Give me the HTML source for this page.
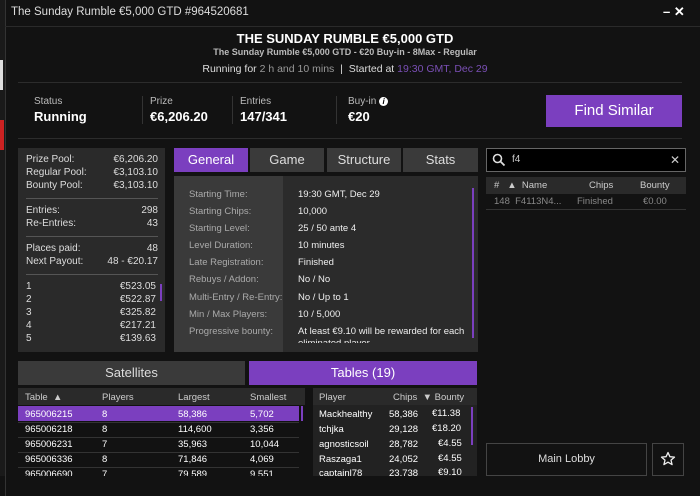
<!DOCTYPE html><html><head><style>
*{margin:0;padding:0;box-sizing:border-box}
body{width:700px;height:496px;background:#1a1a1a;font-family:"Liberation Sans",sans-serif;color:#fff;position:relative;overflow:hidden}
.a{position:absolute}
.win{left:5px;top:0;width:695px;height:496px;background:#121212;border-left:1px solid #333}
.t{font-size:11px;white-space:nowrap}
.panel{background:#2a2a2a}
.gray{color:#bbb}
.tab{position:absolute;background:#3a3a3a;color:#ddd;font-size:13px;text-align:center;line-height:24px}
.row{position:absolute;font-size:9.5px;white-space:nowrap}
</style></head><body>
<div class="a win"></div>
<div class="a" style="left:0;top:120px;width:4px;height:30px;background:#c22"></div>
<div class="a" style="left:0;top:60px;width:3px;height:30px;background:#ddd"></div>
<div class="a t" style="left:11px;top:6px;font-size:11.5px;color:#ddd">The Sunday Rumble €5,000 GTD #964520681</div>
<div class="a" style="left:663px;top:4px;font-size:13px;font-weight:bold">– ✕</div>
<div class="a" style="left:5px;top:26px;width:695px;height:1px;background:#2a2a2a"></div>
<div class="a t" style="left:0;width:690px;text-align:center;top:31px;font-size:13px;font-weight:bold">THE SUNDAY RUMBLE €5,000 GTD</div>
<div class="a t" style="left:0;width:690px;text-align:center;top:47px;font-size:9px;font-weight:bold;color:#bbb">The Sunday Rumble €5,000 GTD - €20 Buy-in - 8Max - Regular</div>
<div class="a t" style="left:0;width:690px;text-align:center;top:63px;font-size:10.5px;color:#ddd">Running for <span style="color:#999">2 h and 10 mins</span> &nbsp;|&nbsp; Started at <span style="color:#7a4fb5">19:30 GMT, Dec 29</span></div>
<div class="a" style="left:18px;top:82px;width:664px;height:1px;background:#2c2c2c"></div>
<div class="a t gray" style="left:34px;top:96px;font-size:10px">Status</div><div class="a t" style="left:34px;top:109px;font-size:13px;font-weight:bold">Running</div>
<div class="a" style="left:142px;top:96px;width:1px;height:28px;background:#333"></div>
<div class="a t gray" style="left:150px;top:96px;font-size:10px">Prize</div><div class="a t" style="left:150px;top:109px;font-size:13px;font-weight:bold">€6,206.20</div>
<div class="a" style="left:232px;top:96px;width:1px;height:28px;background:#333"></div>
<div class="a t gray" style="left:240px;top:96px;font-size:10px">Entries</div><div class="a t" style="left:240px;top:109px;font-size:13px;font-weight:bold">147/341</div>
<div class="a" style="left:336px;top:96px;width:1px;height:28px;background:#333"></div>
<div class="a t gray" style="left:348px;top:96px;font-size:10px">Buy-in <span style="display:inline-block;width:9px;height:9px;border-radius:50%;background:#fff;color:#000;font-size:8px;line-height:9px;text-align:center;font-style:italic;font-weight:bold">i</span></div><div class="a t" style="left:348px;top:109px;font-size:13px;font-weight:bold">€20</div>
<div class="a" style="left:546px;top:95px;width:136px;height:32px;background:#7b3fbf;font-size:15px;text-align:center;line-height:32px">Find Similar</div>
<div class="a" style="left:18px;top:138px;width:664px;height:1px;background:#2c2c2c"></div>

<div class="a panel" style="left:18px;top:148px;width:147px;height:204px"></div>
<div class="a" style="left:26px;top:153px;width:132px;font-size:10px;line-height:13px;color:#ddd">
<div style="display:flex;justify-content:space-between"><span>Prize Pool:</span><span>€6,206.20</span></div>
<div style="display:flex;justify-content:space-between"><span>Regular Pool:</span><span>€3,103.10</span></div>
<div style="display:flex;justify-content:space-between"><span>Bounty Pool:</span><span>€3,103.10</span></div>
<div style="height:1px;background:#555;margin:6px 0 5px"></div>
<div style="display:flex;justify-content:space-between"><span>Entries:</span><span>298</span></div>
<div style="display:flex;justify-content:space-between"><span>Re-Entries:</span><span>43</span></div>
<div style="height:1px;background:#555;margin:6px 0 5px"></div>
<div style="display:flex;justify-content:space-between"><span>Places paid:</span><span>48</span></div>
<div style="display:flex;justify-content:space-between"><span>Next Payout:</span><span>48 - €20.17</span></div>
<div style="height:1px;background:#555;margin:6px 0 5px"></div>
<div style="display:flex;justify-content:space-between;padding-right:2px"><span>1</span><span>€523.05</span></div>
<div style="display:flex;justify-content:space-between;padding-right:2px"><span>2</span><span>€522.87</span></div>
<div style="display:flex;justify-content:space-between;padding-right:2px"><span>3</span><span>€325.82</span></div>
<div style="display:flex;justify-content:space-between;padding-right:2px"><span>4</span><span>€217.21</span></div>
<div style="display:flex;justify-content:space-between;padding-right:2px"><span>5</span><span>€139.63</span></div>
</div>
<div class="a" style="left:160px;top:284px;width:2px;height:17px;background:#7b3fbf"></div>

<div class="tab" style="left:174px;top:148px;width:74px;background:#7b3fbf;color:#fff">General</div>
<div class="tab" style="left:250px;top:148px;width:74px">Game</div>
<div class="tab" style="left:327px;top:148px;width:74px">Structure</div>
<div class="tab" style="left:403px;top:148px;width:75px">Stats</div>
<div class="a" style="left:174px;top:176px;width:304px;height:176px;background:#2b2b2b"></div>
<div class="a" style="left:174px;top:176px;width:109px;height:176px;background:#3a3a3a"></div>
<div class="a" style="left:189px;top:186px;font-size:9.5px;line-height:17.1px;color:#aaa;white-space:nowrap">Starting Time:<br>Starting Chips:<br>Starting Level:<br>Level Duration:<br>Late Registration:<br>Rebuys / Addon:<br>Multi-Entry / Re-Entry:<br>Min / Max Players:<br>Progressive bounty:</div>
<div class="a" style="left:298px;top:186px;width:168px;font-size:9.5px;line-height:17.1px;color:#eee;height:157px;overflow:hidden">19:30 GMT, Dec 29<br>10,000<br>25 / 50 ante 4<br>10 minutes<br>Finished<br>No / No<br>No / Up to 1<br>10 / 5,000<br><span style="line-height:12px;display:block;margin-top:3px">At least €9.10 will be rewarded for each eliminated player</span></div>
<div class="a" style="left:472px;top:188px;width:2px;height:150px;background:#7b3fbf"></div>

<div class="a" style="left:486px;top:148px;width:200px;height:24px;background:#000;border:1px solid #666"></div>
<svg class="a" style="left:492px;top:153px" width="14" height="14"><circle cx="5.5" cy="5.5" r="4" stroke="#ddd" stroke-width="1.6" fill="none"/><line x1="8.5" y1="8.5" x2="12.5" y2="12.5" stroke="#ddd" stroke-width="1.8"/></svg>
<div class="a t" style="left:512px;top:154px;font-size:10px;color:#ccc">f4</div>
<div class="a t" style="left:670px;top:153px;font-size:12px;color:#ccc">✕</div>
<div class="a" style="left:486px;top:177px;width:200px;height:17px;background:#2a2a2a"></div>
<div class="row" style="left:494px;top:180px;color:#ccc">#&nbsp;&nbsp;&nbsp;▲&nbsp;&nbsp;Name</div>
<div class="row" style="left:589px;top:180px;color:#ccc">Chips</div>
<div class="row" style="left:640px;top:180px;color:#ccc">Bounty</div>
<div class="row" style="left:494px;top:196px;color:#888">148&nbsp;&nbsp;F4113N4...</div>
<div class="row" style="left:577px;top:196px;color:#888">Finished</div>
<div class="row" style="left:643px;top:196px;color:#888">€0.00</div>
<div class="a" style="left:486px;top:209px;width:200px;height:1px;background:#333"></div>

<div class="tab" style="left:18px;top:361px;width:227px;font-size:13px">Satellites</div>
<div class="tab" style="left:249px;top:361px;width:228px;background:#7b3fbf;color:#fff;font-size:13px">Tables (19)</div>
<div class="a" style="left:18px;top:388px;width:287px;height:17px;background:#2a2a2a"></div>
<div class="a" style="left:313px;top:388px;width:164px;height:17px;background:#2a2a2a"></div>
<div class="a" style="left:313px;top:405px;width:164px;height:91px;background:#222"></div>
<div class="row" style="left:25px;top:392px;color:#ccc">Table &nbsp;▲</div><div class="row" style="left:102px;top:392px;color:#ccc">Players</div><div class="row" style="left:178px;top:392px;color:#ccc">Largest</div><div class="row" style="left:250px;top:392px;color:#ccc">Smallest</div>
<div class="a" style="left:18px;top:406px;width:281px;height:15px;background:#7b3fbf"></div>
<div class="a" style="left:301px;top:406px;width:2px;height:15px;background:#7b3fbf"></div>
<div class="row" style="left:25px;top:409px">965006215</div><div class="row" style="left:102px;top:409px">8</div><div class="row" style="left:178px;top:409px">58,386</div><div class="row" style="left:250px;top:409px">5,702</div>
<div class="a" style="left:18px;top:422px;width:281px;height:1px;background:#333"></div>
<div class="row" style="left:25px;top:424px">965006218</div><div class="row" style="left:102px;top:424px">8</div><div class="row" style="left:178px;top:424px">114,600</div><div class="row" style="left:250px;top:424px">3,356</div>
<div class="a" style="left:18px;top:437px;width:281px;height:1px;background:#333"></div>
<div class="row" style="left:25px;top:439px">965006231</div><div class="row" style="left:102px;top:439px">7</div><div class="row" style="left:178px;top:439px">35,963</div><div class="row" style="left:250px;top:439px">10,044</div>
<div class="a" style="left:18px;top:452px;width:281px;height:1px;background:#333"></div>
<div class="row" style="left:25px;top:454px">965006336</div><div class="row" style="left:102px;top:454px">8</div><div class="row" style="left:178px;top:454px">71,846</div><div class="row" style="left:250px;top:454px">4,069</div>
<div class="a" style="left:18px;top:467px;width:281px;height:1px;background:#333"></div>
<div class="a" style="left:18px;top:468px;width:287px;height:8px;overflow:hidden"><div class="row" style="left:7px;top:1px">965006690</div><div class="row" style="left:84px;top:1px">7</div><div class="row" style="left:160px;top:1px">79,589</div><div class="row" style="left:232px;top:1px">9,551</div></div>
<div class="row" style="left:319px;top:392px;color:#ccc">Player</div><div class="row" style="left:393px;top:392px;color:#ccc">Chips &nbsp;▼ Bounty</div>
<div class="a" style="left:471px;top:407px;width:2px;height:38px;background:#7b3fbf"></div>
<div class="row" style="left:319px;top:409px">Mackhealthy</div><div class="row" style="left:389px;top:409px">58,386</div><div class="row" style="left:432px;top:408px">€11.38</div>
<div class="row" style="left:319px;top:424px">tchjka</div><div class="row" style="left:389px;top:424px">29,128</div><div class="row" style="left:432px;top:423px">€18.20</div>
<div class="row" style="left:319px;top:439px">agnosticsoil</div><div class="row" style="left:389px;top:439px">28,782</div><div class="row" style="left:438px;top:438px">€4.55</div>
<div class="row" style="left:319px;top:454px">Raszaga1</div><div class="row" style="left:389px;top:454px">24,052</div><div class="row" style="left:438px;top:453px">€4.55</div>
<div class="a" style="left:313px;top:467px;width:164px;height:9px;overflow:hidden"><div class="row" style="left:6px;top:1px">captainl78</div><div class="row" style="left:76px;top:1px">23,738</div><div class="row" style="left:125px;top:0px">€9.10</div></div>
<div class="a" style="left:0;top:476px;width:700px;height:20px;background:#121212"></div>
<div class="a" style="left:5px;top:476px;width:1px;height:20px;background:#333"></div>
<div class="a" style="left:486px;top:443px;width:161px;height:33px;border:1px solid #444;font-size:11px;text-align:center;line-height:31px;color:#ddd">Main Lobby</div>
<div class="a" style="left:652px;top:443px;width:32px;height:33px;border:1px solid #444"></div>
<svg class="a" style="left:660px;top:451px" width="16" height="16" viewBox="0 0 16 16"><path d="M8 1.5l1.9 4.2 4.6.4-3.5 3 1.1 4.5L8 11.2 3.9 13.6 5 9.1 1.5 6.1l4.6-.4z" fill="none" stroke="#eee" stroke-width="1.3" stroke-linejoin="round"/></svg>
</body></html>
